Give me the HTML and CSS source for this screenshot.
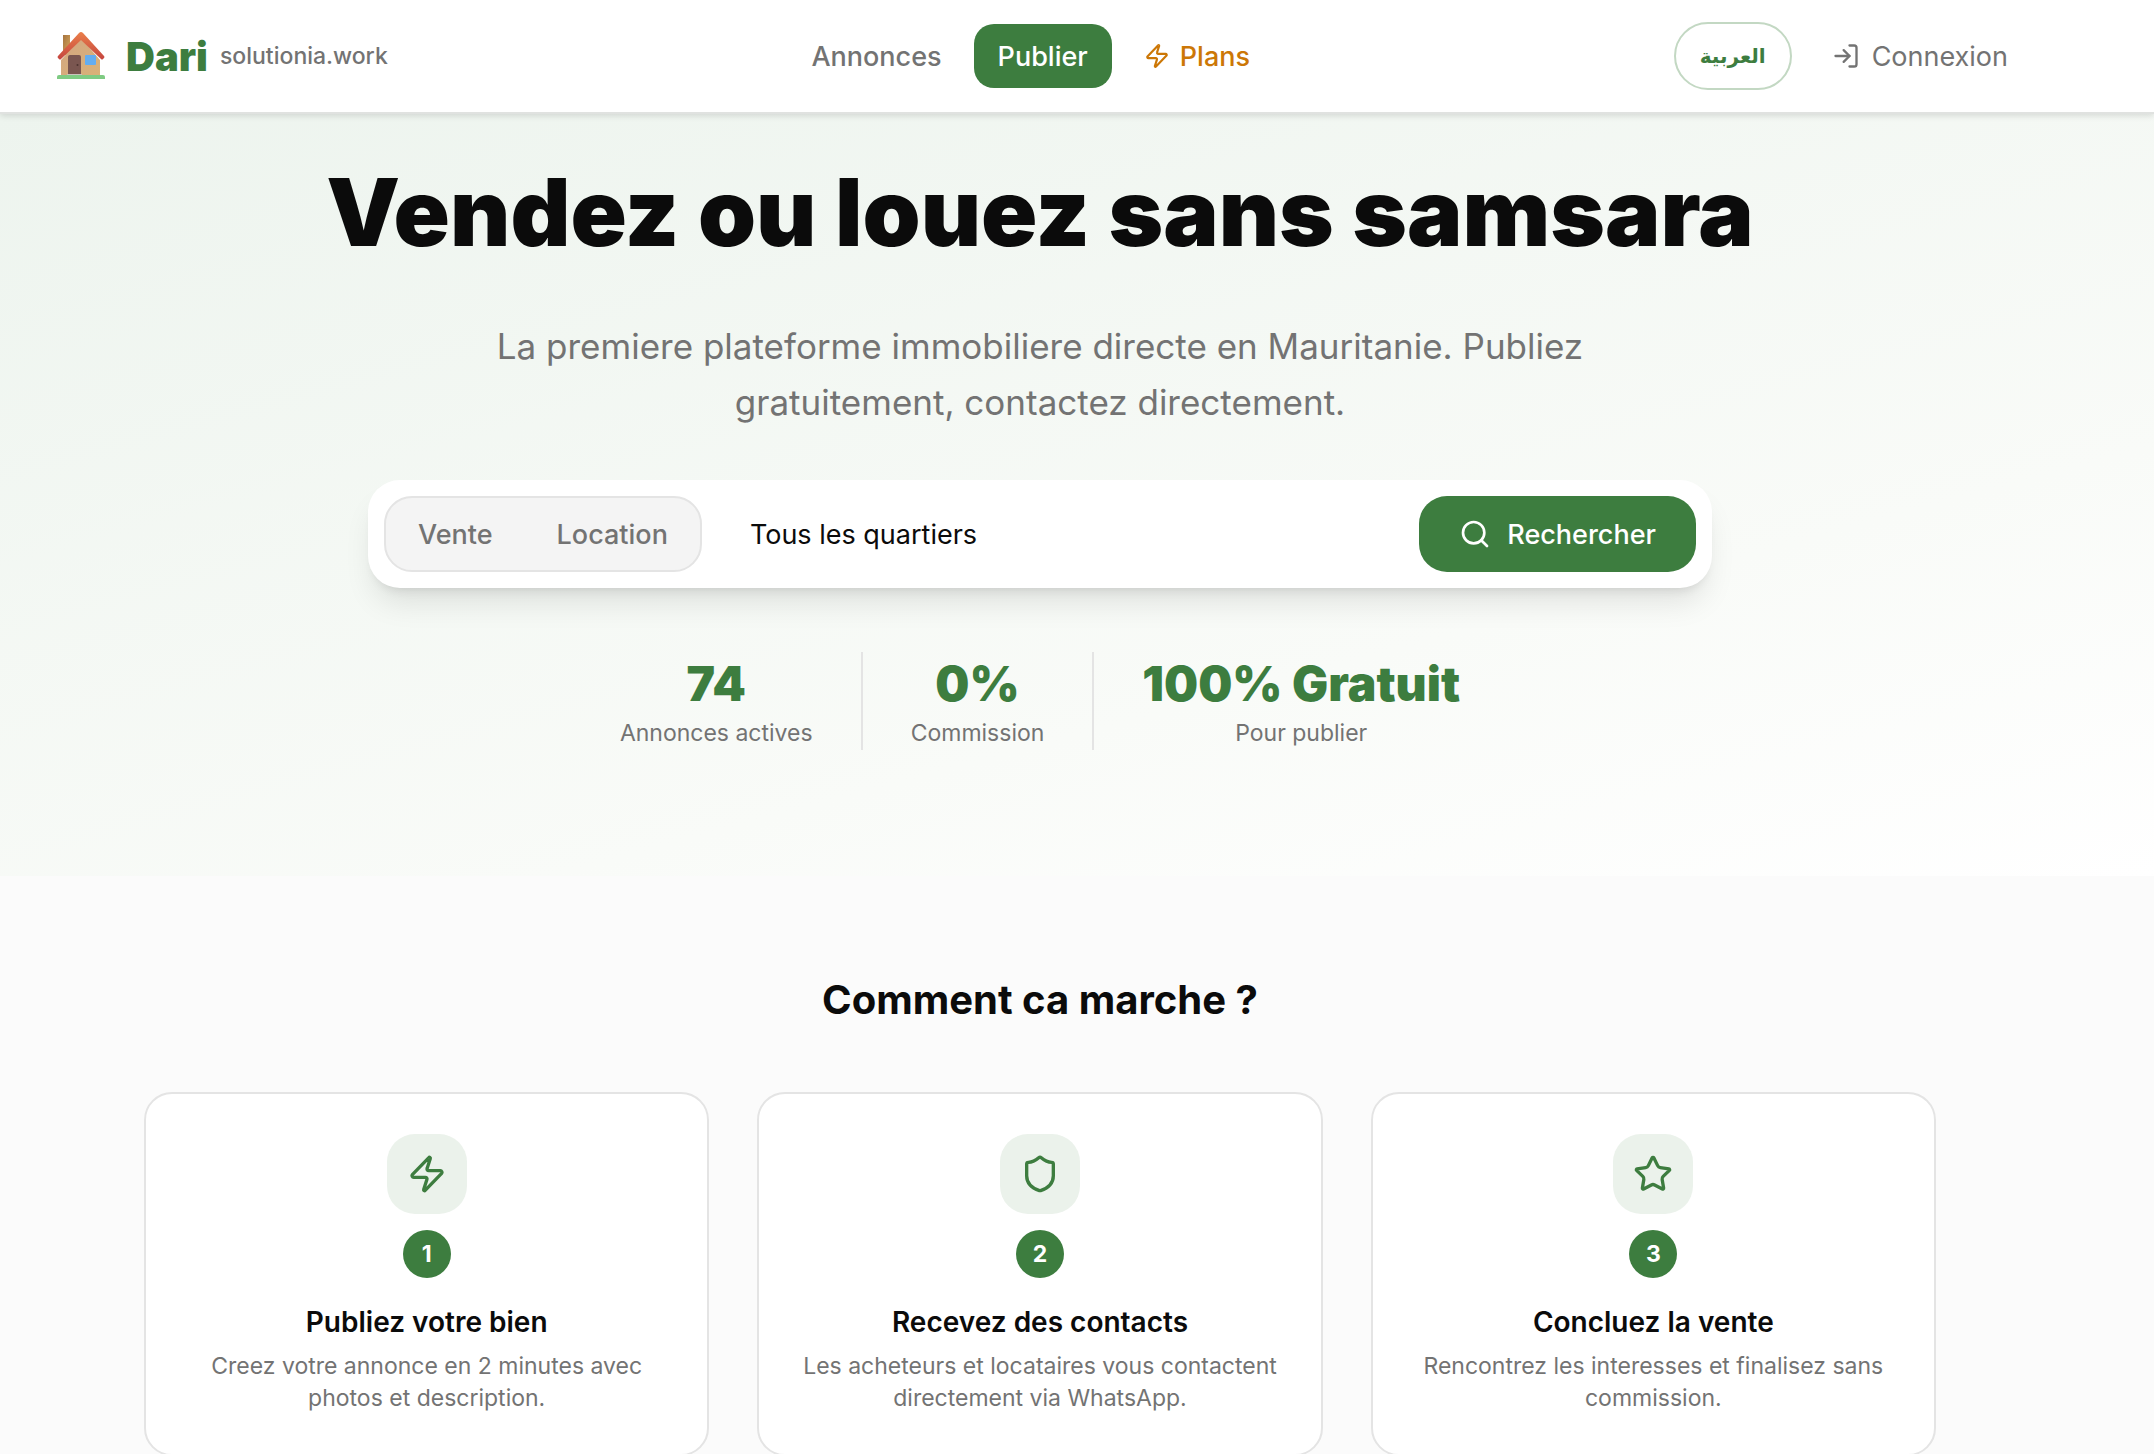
FILE: index.html
```html
<!DOCTYPE html>
<html lang="fr">
<head>
<meta charset="utf-8">
<meta name="viewport" content="width=device-width, initial-scale=1">
<title>Dari</title>
<link rel="stylesheet" href="styles.css">
</head>
<body>

<header class="header">
  <a class="logo" href="#">
    <svg class="logo-house" viewBox="0 0 64 48" aria-hidden="true">
      <defs>
        <linearGradient id="wall" x1="0" y1="0" x2="1" y2="1"><stop offset="0" stop-color="#d3a682"/><stop offset="1" stop-color="#d9b277"/></linearGradient>
        <linearGradient id="roof" x1="0" y1="0" x2="0" y2="1"><stop offset="0" stop-color="#ea7f4a"/><stop offset="1" stop-color="#c5453f"/></linearGradient>
        <linearGradient id="chimney" x1="0" y1="0" x2="1" y2="1"><stop offset="0" stop-color="#a5743f"/><stop offset="1" stop-color="#d9a85c"/></linearGradient>
      </defs>
      <path d="M15 3h7v20h-7z" fill="url(#chimney)"/>
      <path d="M13 28 33 6l19 22v16H13z" fill="url(#wall)"/>
      <path d="M20 25q0-2 2-2h9q2 0 2 2v18H20z" fill="#7a5650"/>
      <path d="M19 42h15v2H19z" fill="#c9c3bd"/>
      <circle cx="29.500" cy="33" r="1" fill="#4c322e"/>
      <rect x="37" y="23" width="11" height="10" rx="1" fill="#63adf0"/>
      <path d="M33 0q1 0 2 1l21 23q1 1 0 2l-1 1q-1 1-2 0L33 8 13 27q-1 1-2 0l-1-1q-1-1 0-2L31 1q1-1 2-1z" fill="url(#roof)"/>
      <path d="M11 43h44q2 0 2 2v2H9v-2q0-2 2-2z" fill="#7fcb83"/>
    </svg>
    <span class="logo-name">Dari</span>
    <span class="logo-site">solutionia.work</span>
  </a>

  <nav class="nav">
    <a class="nav-link" href="#">Annonces</a>
    <a class="nav-link nav-publish" href="#">Publier</a>
    <a class="nav-link nav-plans" href="#">
      <svg class="icon icon-small" viewBox="0 0 24 24" aria-hidden="true"><path d="M4 14a1 1 0 0 1-.78-1.630l9.900-10.200a.5.5 0 0 1 .86.460l-1.920 6.020A1 1 0 0 0 13 10h7a1 1 0 0 1 .78 1.630l-9.900 10.200a.5.5 0 0 1-.86-.460l1.920-6.020A1 1 0 0 0 11 14z"/></svg>
      Plans
    </a>
  </nav>

  <div class="account">
    <button class="lang" type="button" lang="ar">العربية</button>
    <a class="login" href="#">
      <svg class="icon" viewBox="0 0 24 24" aria-hidden="true"><path d="M15 3h4a2 2 0 0 1 2 2v14a2 2 0 0 1-2 2h-4"/><path d="m10 17 5-5-5-5"/><path d="M15 12H3"/></svg>
      Connexion
    </a>
  </div>
</header>

<main>
  <section class="hero">
    <h1>Vendez ou louez sans samsara</h1>
    <p class="lead">La premiere plateforme immobiliere directe en Mauritanie. Publiez gratuitement, contactez directement.</p>

    <form class="search">
      <div class="search-type">
        <button type="button">Vente</button>
        <button type="button">Location</button>
      </div>
      <select class="search-area" aria-label="Quartier">
        <option>Tous les quartiers</option>
      </select>
      <button class="search-submit" type="submit">
        <svg class="icon icon-search" viewBox="0 0 24 24" aria-hidden="true"><circle cx="11" cy="11" r="8"/><path d="m21 21-4.340-4.340"/></svg>
        Rechercher
      </button>
    </form>

    <div class="stats">
      <div class="stat"><strong>74</strong><span>Annonces actives</span></div>
      <div class="stat"><strong>0%</strong><span>Commission</span></div>
      <div class="stat"><strong>100% Gratuit</strong><span>Pour publier</span></div>
    </div>
  </section>

  <section class="how">
    <h2>Comment ca marche ?</h2>
    <div class="steps">
      <article class="step">
        <div class="step-icon">
          <svg class="icon icon-large" viewBox="0 0 24 24" aria-hidden="true"><path d="M4 14a1 1 0 0 1-.78-1.630l9.900-10.200a.5.5 0 0 1 .86.460l-1.920 6.020A1 1 0 0 0 13 10h7a1 1 0 0 1 .78 1.630l-9.900 10.200a.5.5 0 0 1-.86-.460l1.920-6.020A1 1 0 0 0 11 14z"/></svg>
        </div>
        <div class="step-number">1</div>
        <h3>Publiez votre bien</h3>
        <p>Creez votre annonce en 2 minutes avec photos et description.</p>
      </article>
      <article class="step">
        <div class="step-icon">
          <svg class="icon icon-large" viewBox="0 0 24 24" aria-hidden="true"><path d="M20 13c0 5-3.500 7.500-7.660 8.950a1 1 0 0 1-.67-.010C7.500 20.500 4 18 4 13V6a1 1 0 0 1 1-1c2 0 4.500-1.200 6.240-2.720a1.170 1.170 0 0 1 1.520 0C14.510 3.810 17 5 19 5a1 1 0 0 1 1 1z"/></svg>
        </div>
        <div class="step-number">2</div>
        <h3>Recevez des contacts</h3>
        <p>Les acheteurs et locataires vous contactent directement via WhatsApp.</p>
      </article>
      <article class="step">
        <div class="step-icon">
          <svg class="icon icon-large" viewBox="0 0 24 24" aria-hidden="true"><path d="M11.525 2.295a.53.53 0 0 1 .95 0l2.310 4.679a2.123 2.123 0 0 0 1.595 1.160l5.166.756a.53.53 0 0 1 .294.904l-3.736 3.638a2.123 2.123 0 0 0-.611 1.878l.882 5.140a.53.53 0 0 1-.771.560l-4.618-2.428a2.122 2.122 0 0 0-1.973 0L6.396 21.010a.53.53 0 0 1-.770-.560l.881-5.139a2.122 2.122 0 0 0-.611-1.879L2.160 9.795a.53.53 0 0 1 .294-.906l5.165-.755a2.122 2.122 0 0 0 1.597-1.160z"/></svg>
        </div>
        <div class="step-number">3</div>
        <h3>Concluez la vente</h3>
        <p>Rencontrez les interesses et finalisez sans commission.</p>
      </article>
    </div>
  </section>
</main>

</body>
</html>
```
FILE: styles.css
```css
:root {
  --green: #3d7d3f;
  --text: #0b0b0b;
  --muted: #737373;
  --line: #e4e4e4;
  --gutter: 74px;
}

* { box-sizing: border-box; }

body { margin: 0; font-family: Inter, "Liberation Sans", sans-serif; font-size: 27px; color: var(--text); background: #fbfbfb; }
h1, h2, h3, p { margin: 0; }
a { color: inherit; text-decoration: none; }
button, select { font: inherit; color: inherit; border: 0; background: none; cursor: pointer; }

.icon { width: 28px; height: 28px; fill: none; stroke: currentColor; stroke-width: 2; stroke-linecap: round; stroke-linejoin: round; }
.icon-small { width: 26px; height: 26px; }
.icon-search { width: 32px; height: 32px; }
.icon-large { width: 40px; height: 40px; }

/* header */
.header { position: sticky; top: 0; z-index: 10; display: flex; align-items: center; justify-content: space-between; height: 114px; padding: 0 calc(var(--gutter) + 48px) 0 48px; background: #fff; border-bottom: 2px solid #e0e2e0; box-shadow: 0 2px 6px rgba(0,0,0,.12); }
.logo { display: flex; align-items: center; }
.logo-house { width: 64px; height: 48px; margin-right: 14px; }
.logo-name { font-size: 40px; font-weight: 900; color: var(--green); margin-right: 12px; }
.logo-site { font-size: 23px; font-weight: 500; color: var(--muted); }
.nav { display: flex; gap: 8px; }
.nav-link { display: flex; align-items: center; gap: 10px; height: 64px; padding: 0 24px; border-radius: 20px; font-weight: 500; color: var(--muted); }
.nav-publish { color: #fff; background: var(--green); }
.nav-plans { color: #cc7706; }
.account { display: flex; align-items: center; gap: 16px; }
.lang { height: 68px; padding: 0 24px; border: 2px solid #c3d8c3; border-radius: 34px; font-family: "DejaVu Sans", sans-serif; font-size: 20px; font-weight: 700; color: var(--green); }
.login { display: flex; align-items: center; gap: 12px; padding: 0 24px; color: var(--muted); }

/* hero */
.hero { display: flex; flex-direction: column; align-items: center; padding: 48px var(--gutter) 126px 0; text-align: center; background: linear-gradient(165deg, #edf4ee 0%, #f9fbf8 68%, #fff 100%); }
.hero h1 { font-size: 93px; line-height: 100px; font-weight: 900; }
.lead { max-width: 1152px; margin: 56px 0 50px; font-size: 35px; line-height: 56px; color: var(--muted); }
.search { display: flex; width: 100%; max-width: 1344px; padding: 16px; background: #fff; border-radius: 32px; box-shadow: 0 20px 30px -6px rgba(0,0,0,.1), 0 8px 12px -8px rgba(0,0,0,.14); }
.search-type { display: flex; height: 76px; border: 2px solid var(--line); border-radius: 28px; background: #f4f4f4; }
.search-type button { padding: 0 32px; font-weight: 500; color: var(--muted); }
.search-area { flex: 1; padding: 0 48px; appearance: none; }
.search-submit { display: flex; align-items: center; gap: 16px; padding: 0 40px; border-radius: 28px; font-weight: 500; color: #fff; background: var(--green); }
.stats { display: flex; margin-top: 64px; }
.stat { display: flex; flex-direction: column; padding: 0 48px; }
.stat + .stat { border-left: 2px solid var(--line); }
.stat strong { font-size: 48px; line-height: 64px; font-weight: 900; color: var(--green); }
.stat span { font-size: 23px; line-height: 34px; color: var(--muted); }

/* steps */
.how { padding: 96px calc(var(--gutter) + 48px) 96px 48px; text-align: center; }
.how h2 { margin-bottom: 64px; font-size: 40px; line-height: 56px; font-weight: 700; }
.steps { display: grid; grid-template-columns: repeat(3, 1fr); gap: 48px; max-width: 1792px; margin: 0 auto; }
.step { display: flex; flex-direction: column; align-items: center; padding: 40px; border: 2px solid var(--line); border-radius: 28px; background: #fff; }
.step-icon { display: flex; align-items: center; justify-content: center; width: 80px; height: 80px; border-radius: 28px; color: var(--green); background: #ebf2eb; }
.step-number { width: 48px; height: 48px; margin: 16px 0 24px; border-radius: 50%; font-size: 23px; line-height: 48px; font-weight: 700; color: #fff; background: var(--green); }
.step h3 { margin-bottom: 8px; font-size: 28px; line-height: 40px; font-weight: 600; }
.step p { font-size: 23px; line-height: 32px; color: var(--muted); }
```
